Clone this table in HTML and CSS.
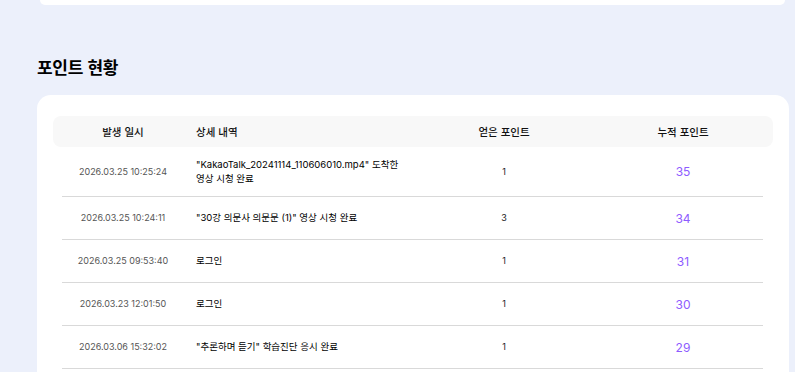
FILE: index.html
```html
<!DOCTYPE html>
<html lang="ko">
<head>
<meta charset="utf-8">
<title>포인트 현황</title>
<link rel="stylesheet" href="styles.css">
</head>
<body>
<div class="page">
  <div class="top-card"></div>
  <h2 class="section-title">포인트 현황</h2>
  <div class="card">
    <div class="thead">
      <div class="th c1">발생 일시</div>
      <div class="th c2">상세 내역</div>
      <div class="th c3">얻은 포인트</div>
      <div class="th c4">누적 포인트</div>
    </div>
    <div class="row">
      <div class="td date">2026.03.25 10:25:24</div>
      <div class="td desc">"KakaoTalk_20241114_110606010.mp4" 도착한<br>영상 시청 완료</div>
      <div class="td earned">1</div>
      <div class="td total">35</div>
    </div>
    <div class="row">
      <div class="td date">2026.03.25 10:24:11</div>
      <div class="td desc">"30강 의문사 의문문 (1)" 영상 시청 완료</div>
      <div class="td earned">3</div>
      <div class="td total">34</div>
    </div>
    <div class="row">
      <div class="td date">2026.03.25 09:53:40</div>
      <div class="td desc">로그인</div>
      <div class="td earned">1</div>
      <div class="td total">31</div>
    </div>
    <div class="row">
      <div class="td date">2026.03.23 12:01:50</div>
      <div class="td desc">로그인</div>
      <div class="td earned">1</div>
      <div class="td total">30</div>
    </div>
    <div class="row">
      <div class="td date">2026.03.06 15:32:02</div>
      <div class="td desc">"추론하며 듣기" 학습진단 응시 완료</div>
      <div class="td earned">1</div>
      <div class="td total">29</div>
    </div>
  </div>
</div>
</body>
</html>
```
FILE: styles.css
```css
html, body {
  margin: 0;
  padding: 0;
  background: #ecf0fb;
  font-family: Inter, "Noto Sans CJK KR", sans-serif;
  color: #111;
}

.page {
  padding: 0 6px 0 37px;
  height: 372px;
  overflow: hidden;
}

.top-card {
  height: 5px;
  margin: 0 4px 0 3px;
  background: #fff;
  border-radius: 0 0 14px 14px;
}

.section-title {
  margin: 0;
  padding: 49px 0 15px;
  height: 26px;
  font-size: 17px;
  line-height: 26px;
  font-weight: 700;
  letter-spacing: -0.3px;
  color: #000;
  font-family: "Noto Sans CJK KR", sans-serif;
}

.card {
  background: #fff;
  border-radius: 14px 14px 0 0;
  padding: 21px 16px 0;
  height: 290px;
  box-sizing: border-box;
}

.thead {
  display: grid;
  grid-template-columns: 140px 222px 178px 180px;
  align-items: center;
  height: 31px;
  background: #f8f8f8;
  border-radius: 8px;
}

.th {
  font-family: "Noto Sans CJK KR", sans-serif;
  font-size: 10.5px;
  font-weight: 500;
  color: #111;
  text-align: center;
}

.th.c2 {
  text-align: left;
  padding-left: 3px;
}

.row {
  display: grid;
  grid-template-columns: 131px 222px 178px 170px;
  align-items: center;
  margin: 0 10px 0 9px;
  padding: 10.5px 0;
  border-bottom: 1px solid #d9d9d9;
}

.td {
  font-size: 9px;
  line-height: 14px;
}

.date {
  color: #555;
  text-align: center;
  padding-right: 9px;
}

.desc {
  color: #000;
  padding-left: 3px;
  font-size: 9.5px;
  font-weight: 400;
}

.earned {
  text-align: center;
  color: #222;
}

.total {
  text-align: center;
  padding-left: 10px;
  font-size: 12px;
  line-height: 21px;
  color: #8e5cff;
}
```
